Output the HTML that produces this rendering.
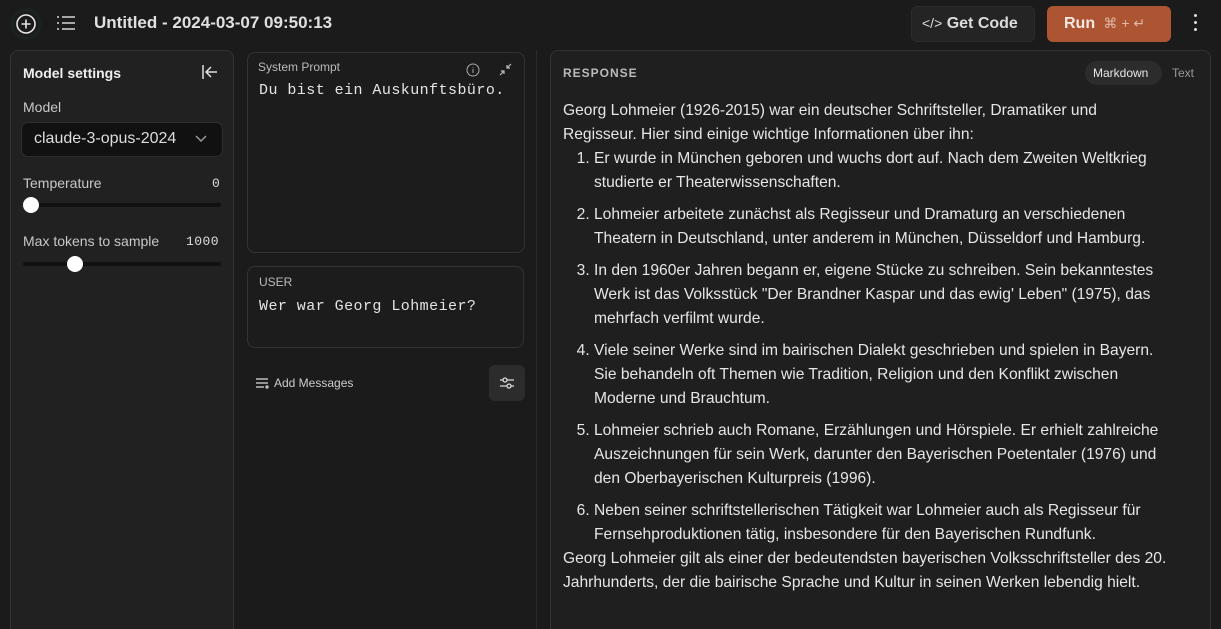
<!DOCTYPE html>
<html><head><meta charset="utf-8"><style>
*{box-sizing:border-box;margin:0;padding:0}
html,body{width:1221px;height:629px;overflow:hidden}
body{background:#1b1b1b;color:#e8e8e8;font-family:"Liberation Sans",sans-serif;position:relative}
.abs{position:absolute}
.mono{font-family:"Liberation Mono",monospace;letter-spacing:0.45px}
.panel{position:absolute;border:1px solid #333;border-radius:8px;background:#212121}
.lbl{font-size:14px;color:#c8c8c8}
.track{position:absolute;left:23px;width:198px;height:4px;border-radius:2px;background:#111}
.knob{position:absolute;width:16px;height:16px;border-radius:50%;background:#fff}
#resp{position:absolute;left:563px;top:99px;width:620px;font-size:15.6px;line-height:24px;color:#e6e6e6}
#resp ol{margin:0;padding-left:31px}
#resp li+li{margin-top:8px}
</style></head><body>
<div class="abs" style="left:13px;top:11px;width:26px;height:26px;border-radius:50%;box-shadow:0 0 6px #1e3a30"></div>
<svg class="abs" style="left:15px;top:13px" width="22" height="22" viewBox="0 0 22 22" fill="none" stroke="#e6e6e6" stroke-width="1.6"><circle cx="11" cy="11" r="9"/><path d="M11 6.5v9M6.5 11h9"/></svg>
<svg class="abs" style="left:56px;top:15px" width="20" height="18" viewBox="0 0 20 18" fill="none" stroke="#d8d8d8" stroke-width="1.6"><path d="M1 2h2M1 8h2M1 14h2M6 2h13M6 8h13M6 14h13"/></svg>
<div class="abs" style="left:94px;top:13px;font-size:17px;font-weight:bold;color:#e0e0e0">Untitled - 2024-03-07 09:50:13</div>
<div class="abs" style="left:911px;top:6px;width:124px;height:36px;border-radius:6px;background:#242424;border:1px solid #2c2c2c"></div>
<div class="abs" style="left:922px;top:15px;font-size:16px;font-weight:bold;color:#dcdcdc"><span style="font-weight:normal;font-size:14px">&lt;/&gt;</span> Get Code</div>
<div class="abs" style="left:1047px;top:6px;width:124px;height:36px;border-radius:6px;background:#ad5532"></div>
<div class="abs" style="left:1064px;top:15px;font-size:16px;font-weight:bold;color:#f4e8e2">Run <span style="font-weight:normal;font-size:14px;color:#e0b8a6">&nbsp;⌘ + ↵</span></div>
<div class="abs" style="left:1194px;top:14px;font-size:0"><div style="width:3px;height:3px;background:#ddd;border-radius:50%;margin-bottom:4px"></div><div style="width:3px;height:3px;background:#ddd;border-radius:50%;margin-bottom:4px"></div><div style="width:3px;height:3px;background:#ddd;border-radius:50%"></div></div>

<div class="panel" style="left:10px;top:50px;width:224px;height:590px"></div>
<div class="abs" style="left:23px;top:65px;font-size:14px;font-weight:bold;color:#eee">Model settings</div>
<svg class="abs" style="left:201px;top:64px" width="18" height="16" viewBox="0 0 18 16" fill="none" stroke="#ddd" stroke-width="1.5"><path d="M2 1v14M16 8H5M10 3L5 8l5 5"/></svg>
<div class="abs lbl" style="left:23px;top:99px">Model</div>
<div class="abs" style="left:21px;top:122px;width:202px;height:35px;border-radius:7px;background:#111;border:1px solid #2e2e2e"></div>
<div class="abs" style="left:34px;top:130px;font-size:16px;color:#ddd;width:142px;overflow:hidden;white-space:nowrap">claude-3-opus-2024</div>
<svg class="abs" style="left:194px;top:133px" width="14" height="10" viewBox="0 0 14 10" fill="none" stroke="#999" stroke-width="1.5"><path d="M2 3l5 5 5-5"/></svg>
<div class="abs lbl" style="left:23px;top:175px">Temperature</div>
<div class="abs mono" style="left:212px;top:176px;font-size:13px;color:#ddd">0</div>
<div class="track" style="top:203px"></div><div class="knob" style="left:23px;top:197px"></div>
<div class="abs lbl" style="left:23px;top:233px">Max tokens to sample</div>
<div class="abs mono" style="left:186px;top:234px;font-size:13px;color:#ddd">1000</div>
<div class="track" style="top:262px"></div><div class="knob" style="left:67px;top:256px"></div>

<div class="abs" style="left:240px;top:50px;width:297px;height:580px;border-right:1px solid #2a2a2a"></div>
<div class="panel" style="left:247px;top:52px;width:278px;height:201px;background:#1c1c1c"></div>
<div class="abs" style="left:258px;top:60px;font-size:12px;color:#bbb">System Prompt</div>
<svg class="abs" style="left:466px;top:63px" width="14" height="14" viewBox="0 0 14 14" fill="none" stroke="#aaa" stroke-width="1"><circle cx="7" cy="7" r="6"/><path d="M7 6v4M7 4v.8"/></svg>
<svg class="abs" style="left:499px;top:63px" width="13" height="13" viewBox="0 0 13 13" fill="none" stroke="#bbb" stroke-width="1.2"><path d="M12 1L8 5M8 2v3h3M1 12l4-4M2 8h3v3"/></svg>
<div class="abs mono" style="left:259px;top:82px;font-size:15px;color:#e4e4e4">Du bist ein Auskunftsbüro.</div>
<div class="panel" style="left:247px;top:266px;width:277px;height:82px;background:#1c1c1c"></div>
<div class="abs" style="left:259px;top:275px;font-size:12px;color:#bbb">USER</div>
<div class="abs mono" style="left:259px;top:298px;font-size:15px;color:#e4e4e4">Wer war Georg Lohmeier?</div>
<svg class="abs" style="left:255px;top:377px" width="14" height="12" viewBox="0 0 14 12" fill="none" stroke="#bbb" stroke-width="1.4"><path d="M1 2h12M1 6h12M1 10h8"/><circle cx="12" cy="10" r="1" fill="#bbb"/></svg>
<div class="abs" style="left:274px;top:376px;font-size:12px;color:#ccc">Add Messages</div>
<div class="abs" style="left:489px;top:365px;width:36px;height:36px;border-radius:6px;background:#2c2c2c"></div>
<svg class="abs" style="left:498px;top:374px" width="18" height="18" viewBox="0 0 18 18" fill="none" stroke="#ddd" stroke-width="1.3"><path d="M2 6h14M2 12h14"/><circle cx="7" cy="6" r="2" fill="#2c2c2c"/><circle cx="11" cy="12" r="2" fill="#2c2c2c"/></svg>

<div class="panel" style="left:550px;top:50px;width:661px;height:590px;background:#1f1f1f"></div>
<div class="abs" style="left:563px;top:66px;font-size:12px;font-weight:bold;letter-spacing:1px;color:#bbb">RESPONSE</div>
<div class="abs" style="left:1085px;top:61px;width:77px;height:24px;border-radius:12px;background:#2c2c2c"></div>
<div class="abs" style="left:1093px;top:66px;font-size:12px;color:#e6e6e6">Markdown</div>
<div class="abs" style="left:1172px;top:66px;font-size:12px;color:#999">Text</div>
<div id="resp">
<p>Georg Lohmeier (1926-2015) war ein deutscher Schriftsteller, Dramatiker und<br>Regisseur. Hier sind einige wichtige Informationen über ihn:</p>
<ol>
<li>Er wurde in München geboren und wuchs dort auf. Nach dem Zweiten Weltkrieg<br>studierte er Theaterwissenschaften.</li>
<li>Lohmeier arbeitete zunächst als Regisseur und Dramaturg an verschiedenen<br>Theatern in Deutschland, unter anderem in München, Düsseldorf und Hamburg.</li>
<li>In den 1960er Jahren begann er, eigene Stücke zu schreiben. Sein bekanntestes<br>Werk ist das Volksstück "Der Brandner Kaspar und das ewig' Leben" (1975), das<br>mehrfach verfilmt wurde.</li>
<li>Viele seiner Werke sind im bairischen Dialekt geschrieben und spielen in Bayern.<br>Sie behandeln oft Themen wie Tradition, Religion und den Konflikt zwischen<br>Moderne und Brauchtum.</li>
<li>Lohmeier schrieb auch Romane, Erzählungen und Hörspiele. Er erhielt zahlreiche<br>Auszeichnungen für sein Werk, darunter den Bayerischen Poetentaler (1976) und<br>den Oberbayerischen Kulturpreis (1996).</li>
<li>Neben seiner schriftstellerischen Tätigkeit war Lohmeier auch als Regisseur für<br>Fernsehproduktionen tätig, insbesondere für den Bayerischen Rundfunk.</li>
</ol>
<p>Georg Lohmeier gilt als einer der bedeutendsten bayerischen Volksschriftsteller des 20.<br>Jahrhunderts, der die bairische Sprache und Kultur in seinen Werken lebendig hielt.</p>
</div>
</body></html>
